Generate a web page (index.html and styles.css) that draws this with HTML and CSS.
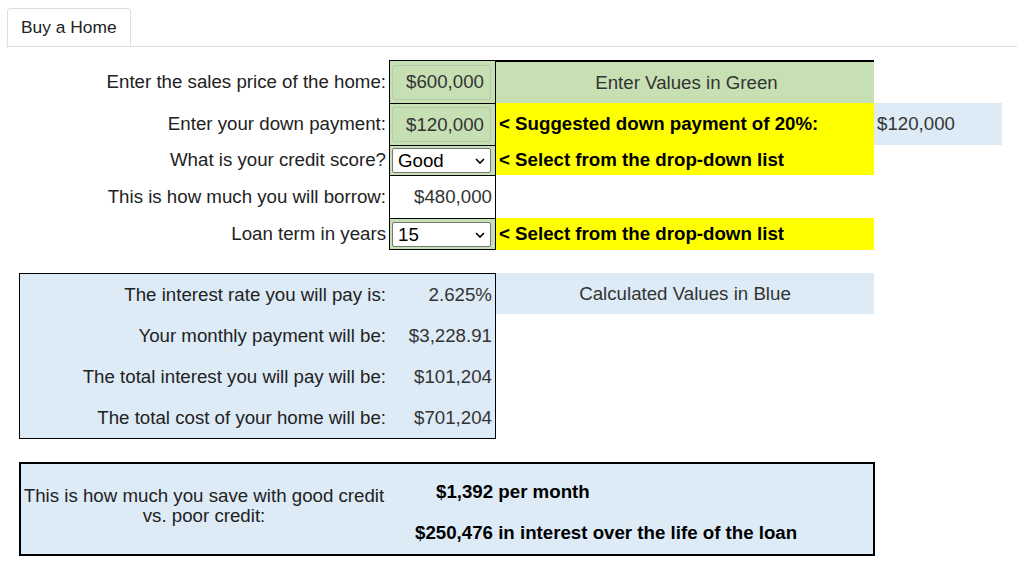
FILE: index.html
```html
<!DOCTYPE html>
<html lang="en">
<head>
    <meta charset="UTF-8">
    <title>Buy a Home</title>
    <link rel="stylesheet" href="styles.css">
</head>
<body>
    <!-- Tabs -->
    <div class="tabs">
        <div class="tab">Buy a Home</div>
    </div>

    <div class="calc">
        <!-- Values entered by the user -->
        <div class="inputs">
            <div class="label">Enter the sales price of the home:</div>
            <div class="entry green"><input class="money" type="text" value="$600,000"></div>
            <div class="note head green">Enter Values in Green</div>
            <div></div>

            <div class="label">Enter your down payment:</div>
            <div class="entry green"><input class="money" type="text" value="$120,000"></div>
            <div class="note yellow">&lt; Suggested down payment of 20%:</div>
            <div class="extra">$120,000</div>

            <div class="label">What is your credit score?</div>
            <div class="entry green">
                <div class="picker">
                    <select>
                        <option>Good</option>
                        <option>Poor</option>
                    </select>
                    <svg class="chevron" width="10" height="6" viewBox="0 0 10 6"><path d="M1 1l4 4 4-4" fill="none" stroke="#000" stroke-width="1.6"/></svg>
                </div>
            </div>
            <div class="note yellow">&lt; Select from the drop-down list</div>
            <div></div>

            <div class="label">This is how much you will borrow:</div>
            <div class="entry value">$480,000</div>
            <div></div>
            <div></div>

            <div class="label">Loan term in years</div>
            <div class="entry green last">
                <div class="picker">
                    <select>
                        <option>15</option>
                        <option>30</option>
                    </select>
                    <svg class="chevron" width="10" height="6" viewBox="0 0 10 6"><path d="M1 1l4 4 4-4" fill="none" stroke="#000" stroke-width="1.6"/></svg>
                </div>
            </div>
            <div class="note yellow">&lt; Select from the drop-down list</div>
            <div></div>
        </div>

        <!-- Calculated values -->
        <div class="results">
            <div class="result-box">
                <div class="label">The interest rate you will pay is:</div>
                <div class="value">2.625%</div>
                <div class="label">Your monthly payment will be:</div>
                <div class="value">$3,228.91</div>
                <div class="label">The total interest you will pay will be:</div>
                <div class="value">$101,204</div>
                <div class="label">The total cost of your home will be:</div>
                <div class="value">$701,204</div>
            </div>
            <div class="result-head">Calculated Values in Blue</div>
        </div>

        <!-- Savings -->
        <div class="savings">
            <div class="savings-text">This is how much you save with good credit<br>vs. poor credit:</div>
            <div class="savings-values">
                <div class="per-month">$1,392 per month</div>
                <div class="per-loan">$250,476 in interest over the life of the loan</div>
            </div>
        </div>
    </div>
</body>
</html>
```

FILE: styles.css
```css
body {
    margin: 0;
    font-family: "Liberation Sans", Arial, sans-serif;
    font-size: 18.7px;
    color: #333;
    background: #fff;
}

/* Tabs */
.tabs {
    display: flex;
    margin: 8px 0 0 6px;
    border-bottom: 1px solid #ddd;
}

.tab {
    height: 37px;
    line-height: 37px;
    padding: 0 13px;
    margin-left: 1px;
    border: 1px solid #ddd;
    border-bottom: none;
    border-radius: 4px 4px 0 0;
    font-size: 17.4px;
    color: #222;
}

.calc {
    padding: 13px 0 0 19px;
}

/* Input grid */
.inputs {
    display: grid;
    grid-template-columns: 370px 107px 378px 128px;
    grid-template-rows: 43px 42px 30px 43px 32px;
}

.inputs > div {
    display: flex;
    align-items: center;
}

.label {
    justify-content: flex-end;
    padding-right: 3px;
    color: #222;
}

.entry {
    box-sizing: border-box;
    border: 1px solid #000;
    border-bottom: none;
    padding: 0 4px 0 2px;
}

.entry.last {
    border-bottom: 1px solid #000;
}

.green {
    background: #c6e0b4;
}

.yellow {
    background: #ffff00;
}

.value {
    justify-content: flex-end;
    padding-right: 3px;
    color: #333;
}

.note {
    box-sizing: border-box;
    padding-left: 3px;
    font-weight: bold;
    color: #000;
}

.note.head {
    justify-content: center;
    font-weight: normal;
    color: #333;
    border-top: 2px solid #000;
}

.extra {
    align-self: stretch;
    background: #ddebf7;
    padding-left: 3px;
    color: #333;
}

.money {
    box-sizing: border-box;
    width: 99px;
    height: 35px;
    padding: 0 6px 0 0;
    border: 1px solid #b8c8ae;
    border-radius: 3px;
    background: transparent;
    text-align: right;
    font: inherit;
    color: #333;
}

/* Drop-downs with a chevron */
.picker {
    position: relative;
    width: 99px;
    height: 25px;
}

select {
    box-sizing: border-box;
    width: 99px;
    height: 25px;
    padding: 0 0 0 5px;
    border: 1px solid #767676;
    border-radius: 2px;
    background: #fff;
    font-family: inherit;
    font-size: 18.7px;
    color: #000;
    appearance: none;
    -webkit-appearance: none;
}

.chevron {
    position: absolute;
    right: 6px;
    top: 10px;
    pointer-events: none;
}

/* Calculated values */
.results {
    display: flex;
    align-items: flex-start;
    margin-top: 23px;
}

.result-box {
    box-sizing: border-box;
    width: 477px;
    display: grid;
    grid-template-columns: 369px 106px;
    grid-auto-rows: 41px;
    border: 1px solid #000;
    background: #ddebf7;
}

.result-box > div {
    display: flex;
    align-items: center;
}

.result-head {
    width: 378px;
    height: 41px;
    line-height: 41px;
    text-align: center;
    background: #ddebf7;
    color: #333;
}

/* Savings */
.savings {
    box-sizing: border-box;
    width: 856px;
    height: 94px;
    margin-top: 23px;
    display: flex;
    border: 2px solid #000;
    background: #ddebf7;
}

.savings-text {
    width: 366px;
    padding-top: 22px;
    line-height: 20px;
    text-align: center;
    color: #222;
}

.savings-values {
    padding: 17px 0 0 28px;
    font-weight: bold;
    color: #000;
}

.per-month {
    padding-left: 21px;
    line-height: 21px;
}

.per-loan {
    margin-top: 20px;
    line-height: 21px;
}
```
